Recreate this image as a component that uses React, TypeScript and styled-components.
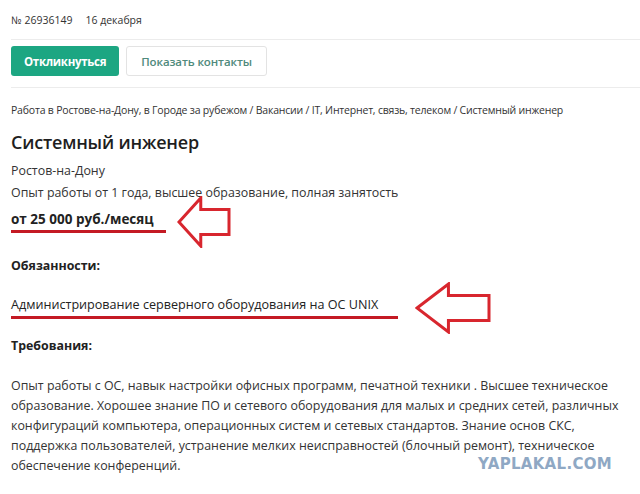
import styled, { createGlobalStyle } from 'styled-components';

const GlobalStyle = createGlobalStyle`
    html, body {
        margin: 0;
        padding: 0;
        background: #ffffff;
    }
    body {
        font-family: "Open Sans", "Noto Sans", "Liberation Sans", sans-serif;
        color: #333333;
    }
`

function Arrow(props: { width: number; height: number }) {
    const w = props.width;
    const h = props.height;
    const headX = w * 0.44;
    const shaftTop = h * 0.26;
    const shaftBottom = h * 0.74;
    return (
        <svg width={w} height={h} viewBox={`0 0 ${w} ${h}`}>
            <polygon
                points={`2,${h / 2} ${headX},2 ${headX},${shaftTop} ${w - 2},${shaftTop} ${w - 2},${shaftBottom} ${headX},${shaftBottom} ${headX},${h - 2}`}
                fill="none"
                stroke="#d8262e"
                strokeWidth="3"
                strokeLinejoin="miter"
            />
        </svg>
    )
}

function App() {
    return (
        <>
            <GlobalStyle />
            <Page>
                <Meta>
                    <span>№ 26936149</span>
                    <span>16 декабря</span>
                </Meta>
                <Divider />
                <Actions>
                    <PrimaryButton>Откликнуться</PrimaryButton>
                    <GhostButton>Показать контакты</GhostButton>
                </Actions>
                <Divider />
                <Breadcrumbs>
                    Работа в Ростове-на-Дону, в Городе за рубежом / Вакансии / IT, Интернет, связь, телеком / Системный инженер
                </Breadcrumbs>
                <Title>Системный инженер</Title>
                <Line gap={7}>Ростов-на-Дону</Line>
                <Line gap={4}>Опыт работы от 1 года, высшее образование, полная занятость</Line>
                <MarkedRow gap={8}>
                    <Marked bold tail={12}>от 25 000 руб./месяц</Marked>
                    <ArrowSlot offset={11}>
                        <Arrow width={54} height={52} />
                    </ArrowSlot>
                </MarkedRow>
                <SectionLabel gap={24}>Обязанности:</SectionLabel>
                <MarkedRow gap={21}>
                    <Marked tail={20}>Администрирование серверного оборудования на ОС UNIX</Marked>
                    <ArrowSlot offset={17}>
                        <Arrow width={76} height={52} />
                    </ArrowSlot>
                </MarkedRow>
                <SectionLabel gap={18}>Требования:</SectionLabel>
                <Paragraph>
                    Опыт работы с ОС, навык настройки офисных программ, печатной техники . Высшее техническое образование. Хорошее знание ПО и сетевого оборудования для малых и средних сетей, различных конфигураций компьютера, операционных систем и сетевых стандартов. Знание основ СКС, поддержка пользователей, устранение мелких неисправностей (блочный ремонт), техническое обеспечение конференций.
                </Paragraph>
                <Watermark>YAPLAKAL.COM</Watermark>
            </Page>
        </>
    )
}

const Page = styled.div`
    position: relative;
    width: 640px;
    height: 494px;
    box-sizing: border-box;
    padding: 12px 0 0 11px;
    overflow: hidden;
`

const Meta = styled.div`
    display: flex;
    gap: 13px;
    font-size: 10.5px;
    line-height: 16px;
    color: #333;
`

const Divider = styled.div`
    height: 1px;
    background: #ececec;
    margin: 11px 0 6px;
`

const Actions = styled.div`
    display: flex;
    gap: 7px;
`

const PrimaryButton = styled.button`
    height: 30px;
    padding: 0 13px;
    border: none;
    border-radius: 3px;
    background: #1ca682;
    color: #ffffff;
    font-family: inherit;
    font-size: 11.5px;
    font-weight: 700;
    letter-spacing: -0.3px;
`

const GhostButton = styled.button`
    height: 30px;
    padding: 0 14px;
    border: 1px solid #e3e3e3;
    border-radius: 3px;
    background: #ffffff;
    color: #4f8a7c;
    font-family: inherit;
    font-size: 11.5px;
    font-weight: 600;
    letter-spacing: -0.1px;
`

const Breadcrumbs = styled.div`
    margin-top: 15px;
    font-size: 10.5px;
    line-height: 14px;
    letter-spacing: -0.2px;
    color: #333;
`

const Title = styled.h1`
    margin: 12px 0 0;
    font-size: 18px;
    line-height: 26px;
    font-weight: 600;
    letter-spacing: -0.2px;
    color: #1e1e1e;
`

const Line = styled.div<{ gap: number }>`
    margin-top: ${p => p.gap}px;
    font-size: 12.4px;
    line-height: 18px;
    color: #333;
`

const MarkedRow = styled.div<{ gap: number }>`
    display: flex;
    align-items: center;
    margin-top: ${p => p.gap}px;
`

const Marked = styled.span<{ bold?: boolean; tail: number }>`
    display: inline-block;
    padding: 0 ${p => p.tail}px 2px 0;
    border-bottom: 3px solid #c41a24;
    font-size: ${p => (p.bold ? 13.5 : 12.6)}px;
    line-height: 18px;
    font-weight: ${p => (p.bold ? 700 : 400)};
    color: #222;
`

const ArrowSlot = styled.div<{ offset: number }>`
    margin: -16px 0 -16px ${p => p.offset}px;
    display: flex;
`

const SectionLabel = styled.div<{ gap: number }>`
    margin-top: ${p => p.gap}px;
    font-size: 12.4px;
    line-height: 18px;
    font-weight: 700;
    color: #222;
`

const Paragraph = styled.p`
    margin: 21px 0 0;
    width: 620px;
    font-size: 12.4px;
    line-height: 20px;
    color: #333;
`

const Watermark = styled.div`
    position: absolute;
    left: 478px;
    top: 455px;
    font-family: "DejaVu Sans", sans-serif;
    font-weight: 700;
    font-size: 15px;
    letter-spacing: 0.3px;
    color: #8fa8c4;
`

export default App;
